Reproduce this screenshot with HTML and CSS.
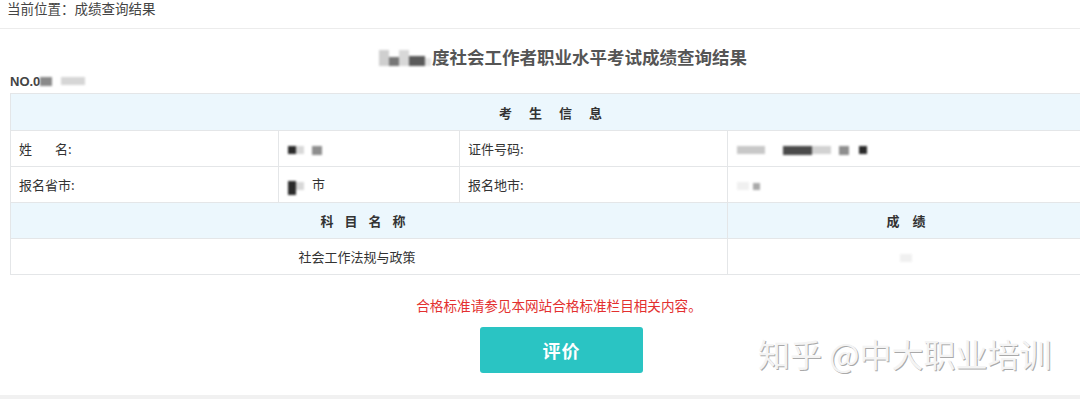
FILE: index.html
```html
<!DOCTYPE html>
<html lang="zh">
<head>
<meta charset="utf-8">
<title>成绩查询结果</title>
<link rel="stylesheet" href="styles.css">
</head>
<body>
<div class="page">
  <div class="crumb">当前位置：成绩查询结果</div>
  <h1 class="title"><span class="mask title-mask">
      <i class="b b-l1"></i><i class="b b-d1"></i><i class="b b-l2"></i><i class="b b-d2"></i><i class="b b-l4"></i>
    </span>度社会工作者职业水平考试成绩查询结果</h1>
  <div class="no">NO.0<span class="mask no-mask"><i class="b b-d3"></i><i class="b b-l3"></i></span></div>
  <table class="grid">
    <colgroup>
      <col class="c1"><col class="c2"><col class="c3"><col class="c4">
    </colgroup>
    <tr class="head"><th colspan="4" class="ws-wide">考 生 信 息</th></tr>
    <tr>
      <td>姓<span class="name-gap"></span>名:</td>
      <td class="val"><span class="mask"><i class="b sq-d"></i><i class="b sq-l"></i><i class="b sq-g gap"></i></span></td>
      <td>证件号码:</td>
      <td class="val"><span class="mask">
        <i class="b id-l"></i><i class="b id-d gap2"></i><i class="b id-l2"></i><i class="b sq-g gap"></i><i class="b sq-d gap3"></i>
      </span></td>
    </tr>
    <tr>
      <td>报名省市:</td>
      <td class="val"><span class="mask city-mask"><i class="b sq-d tall"></i><i class="b sq-l"></i></span>市</td>
      <td>报名地市:</td>
      <td class="val"><span class="mask"><i class="b sq-xl"></i><i class="b sq-g small"></i></span></td>
    </tr>
    <tr class="head head2">
      <th colspan="3" class="ws-mid">科 目 名 称</th>
      <th class="ws-score shift-s">成 绩</th>
    </tr>
    <tr>
      <td colspan="3" class="center shift">社会工作法规与政策</td>
      <td class="center shift-s"><span class="mask"><i class="b sq-xl"></i></span></td>
    </tr>
  </table>
  <p class="note">合格标准请参见本网站合格标准栏目相关内容。</p>
  <div class="actions"><button class="btn" type="button">评价</button></div>
  <div class="footer-line"></div>
  <div class="watermark">知乎 @中大职业培训</div>
</div>
</body>
</html>
```

FILE: styles.css
```css
* { box-sizing: border-box; }

html, body {
  margin: 0;
  padding: 0;
  background: #ffffff;
}

body {
  width: 1080px;
  height: 400px;
  overflow: hidden;
  font-family: "Noto Sans CJK SC", "Noto Sans", sans-serif;
  font-size: 13px;
  color: #333;
}

.page {
  position: relative;
  width: 1080px;
  height: 400px;
}

.crumb {
  height: 29px;
  padding: 0 7px;
  line-height: 16px;
  color: #444;
  font-size: 13.5px;
  border-bottom: 1px solid #ececec;
}

.title {
  margin: 16px 0 0;
  text-align: center;
  font-size: 17.5px;
  font-weight: bold;
  color: #555;
  line-height: 24px;
  padding-left: 46px;
}

.mask {
  display: inline-flex;
  align-items: center;
  vertical-align: middle;
  filter: blur(0.8px);
}

.b {
  display: inline-block;
}

.title-mask { margin-right: 1px; margin-top: -3px; }
.b-l1 { width: 10px; height: 16px; background: #cfcfcf; }
.b-d1 { width: 10px; height: 9px; background: #777; margin-top: 7px; }
.b-l2 { width: 10px; height: 16px; background: #d8d8d8; }
.b-d2 { width: 16px; height: 10px; background: #5a5a5a; margin-top: 6px; }
.b-l4 { width: 6px; height: 8px; background: #e6e6e6; margin-top: 8px; }

.no {
  margin: 5px 0 0 10px;
  font-weight: bold;
  color: #444;
  font-size: 13px;
  line-height: 16px;
  height: 19px;
  font-family: "Liberation Sans", "Noto Sans CJK SC", sans-serif;
}
.no-mask { margin-top: -3px; }
.b-d3 { width: 12px; height: 9px; background: #8a8a8a; }
.b-l3 { width: 24px; height: 8px; background: #d6d6d6; margin-left: 9px; }

.grid {
  margin-left: 10px;
  width: 1080px;
  border-collapse: collapse;
  table-layout: fixed;
}
.c1 { width: 268px; }
.c2 { width: 181px; }
.c3 { width: 268px; }
.c4 { width: 363px; }

.grid th, .grid td {
  height: 36px;
  border: 1px solid #e4e6e8;
  padding: 0 8px;
  font-size: 13px;
  color: #333;
  text-align: left;
  font-weight: normal;
}
.grid .head th {
  height: 37px;
  background: #ecf7fd;
  text-align: center;
  font-weight: bold;
  color: #333;
}
.grid .head2 th { height: 36px; }
.grid .head th.ws-wide { word-spacing: 14px; }
.grid .head th.ws-mid { word-spacing: 8px; padding-right: 20px; }
.grid .head th.ws-score { word-spacing: 10px; }
.grid td.val { padding-left: 9px; }
.grid td.center { text-align: center; }
.grid .shift { padding-right: 32px; }
.grid .shift-s { padding-right: 14px; }

.name-gap { display: inline-block; width: 23px; }

.sq-d { width: 8px; height: 8px; background: #2a2a2a; }
.sq-l { width: 8px; height: 8px; background: #d8d8d8; }
.sq-g { width: 10px; height: 9px; background: #8e8e8e; }
.gap { margin-left: 8px; }
.gap2 { margin-left: 18px; }
.gap3 { margin-left: 10px; }
.tall { height: 14px; margin-top: 4px; }
.city-mask { margin-right: 8px; }
.id-l { width: 28px; height: 8px; background: #c8c8c8; }
.id-d { width: 29px; height: 9px; background: #4a4a4a; }
.id-l2 { width: 19px; height: 8px; background: #d2d2d2; }
.sq-xl { width: 12px; height: 8px; background: #f0f0f0; }
.small { width: 7px; height: 7px; background: #aaa; margin-left: 4px; }

.note {
  margin: 21px 0 0;
  text-align: center;
  color: #e3302f;
  font-size: 13.6px;
  line-height: 18px;
  padding-left: 38px;
}

.actions {
  display: flex;
  padding-left: 480px;
  margin-top: 13px;
}

.btn {
  width: 163px;
  height: 46px;
  border: 0;
  border-radius: 3px;
  background: #2ac4c3;
  color: #fff;
  font-family: "Noto Sans CJK SC", sans-serif;
  font-size: 18px;
  font-weight: bold;
  letter-spacing: 1px;
  cursor: pointer;
}

.footer-line {
  margin-top: 22px;
  height: 4px;
  background: #f1f1f1;
}

.watermark {
  position: absolute;
  left: 758px;
  top: 331px;
  font-family: "Noto Sans CJK SC", sans-serif;
  font-size: 32px;
  line-height: 44px;
  color: #f4f4f4;
  text-shadow: 1px 1px 0 #a9a9a9, -1px -1px 0 #ffffff;
  white-space: nowrap;
}
```
